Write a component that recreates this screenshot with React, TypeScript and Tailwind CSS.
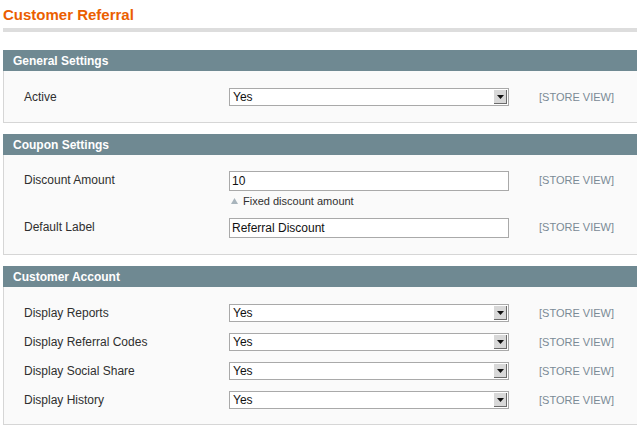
import React from 'react';

const font = { fontFamily: '"Liberation Sans", Arial, sans-serif' };

const SelectBox: React.FC<{ value: string }> = ({ value }) => (
    <div className="relative flex h-[18px] w-[280px] items-center border border-[#a9a9a9] bg-white pl-[3px] text-[12px] leading-[14px] text-[#111]">
        <span>{value}</span>
        <div className="absolute right-[1px] top-[1px] flex h-[14px] w-[13px] items-center justify-center border-b border-r border-[#6b6b6b] bg-[#d8d8d8]">
            <svg width="7" height="4" viewBox="0 0 7 4">
                <path d="M0 0H7L3.5 4Z" fill="#111" />
            </svg>
        </div>
    </div>
);

const TextBox: React.FC<{ value: string }> = ({ value }) => (
    <div className="flex h-[20px] w-[280px] items-center border border-[#a9a9a9] bg-white pl-[2px] text-[12px] leading-[14px] text-[#111]">
        {value}
    </div>
);

const Row: React.FC<{ label: string; children: React.ReactNode }> = ({ label, children }) => (
    <div className="flex items-start">
        <div className="w-[205px] shrink-0 pt-[2px] text-[12px] leading-[14px] text-[#2f2f2f]">{label}</div>
        <div className="w-[280px] shrink-0">{children}</div>
        <div className="ml-[30px] pt-[2px] text-[11px] leading-[14px] text-[#7a8a96]">[STORE VIEW]</div>
    </div>
);

const Section: React.FC<{ title: string; children: React.ReactNode; body: string }> = ({ title, children, body }) => (
    <div className="w-[660px]">
        <div className="flex h-[21px] items-center bg-[#6f8992] pl-[10px] text-[12px] font-bold leading-[14px] text-white">{title}</div>
        <div className={`border border-t-0 border-[#d6d6d6] bg-[#fafafa] pl-[20px] ${body}`}>{children}</div>
    </div>
);

export default function App() {
    return (
        <div className="h-[436px] w-[637px] overflow-hidden bg-white pl-[3px]" style={font}>
            <h1 className="pt-[6px] text-[15px] font-bold leading-[18px] text-[#eb5e00]">Customer Referral</h1>
            <div className="mt-[4px] h-[4px] w-[660px] bg-[#dddddd]" />

            <div className="mt-[18px]">
                <Section title="General Settings" body="pt-[17px] pb-[16px]">
                    <Row label="Active">
                        <SelectBox value="Yes" />
                    </Row>
                </Section>
            </div>

            <div className="mt-[11px]">
                <Section title="Coupon Settings" body="pt-[16px] pb-[16px]">
                    <Row label="Discount Amount">
                        <TextBox value="10" />
                        <div className="mt-[3px] flex items-center gap-[5px] pl-[2px] text-[11px] leading-[14px] text-[#2f2f2f]">
                            <svg width="7" height="6" viewBox="0 0 7 6">
                                <path d="M3.5 0L7 6H0Z" fill="#a8b4bc" />
                            </svg>
                            <span>Fixed discount amount</span>
                        </div>
                    </Row>
                    <div className="mt-[10px]">
                        <Row label="Default Label">
                            <TextBox value="Referral Discount" />
                        </Row>
                    </div>
                </Section>
            </div>

            <div className="mt-[11px]">
                <Section title="Customer Account" body="pt-[17px] pb-[15px]">
                    <div className="flex flex-col gap-[11px]">
                        <Row label="Display Reports">
                            <SelectBox value="Yes" />
                        </Row>
                        <Row label="Display Referral Codes">
                            <SelectBox value="Yes" />
                        </Row>
                        <Row label="Display Social Share">
                            <SelectBox value="Yes" />
                        </Row>
                        <Row label="Display History">
                            <SelectBox value="Yes" />
                        </Row>
                    </div>
                </Section>
            </div>
        </div>
    );
}
